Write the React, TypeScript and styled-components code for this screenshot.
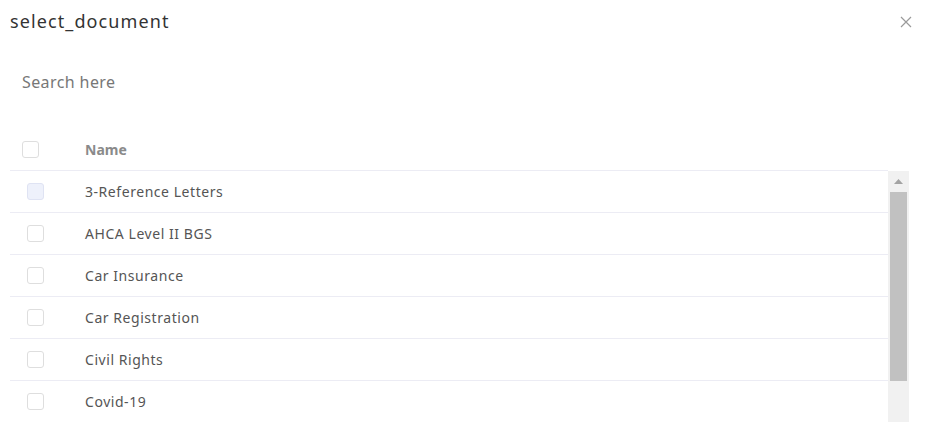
import styled, { createGlobalStyle } from 'styled-components';

const documents = [
  '3-Reference Letters',
  'AHCA Level II BGS',
  'Car Insurance',
  'Car Registration',
  'Civil Rights',
  'Covid-19',
];

const GlobalStyle = createGlobalStyle`
  html, body {
    margin: 0;
    padding: 0;
    background: #fff;
    overflow: hidden;
  }

  body {
    font-family: 'Noto Sans', 'Open Sans', sans-serif;
  }
`;

/**
 * Select document modal
 */
const App = () => {
  return (
    <>
      <GlobalStyle />
      <Modal>
        <ModalHeader>
          <Title>select_document</Title>
          <CloseButton aria-label="close">
            <svg width="12" height="12" viewBox="0 0 12 12">
              <path d="M1 1L11 11M11 1L1 11" stroke="#9a9a9a" strokeWidth="1.2" />
            </svg>
          </CloseButton>
        </ModalHeader>

        <SearchInput placeholder="Search here" />

        <Table>
          <HeadRow>
            <HeadCheckCell>
              <CheckBox />
            </HeadCheckCell>
            <HeadName>Name</HeadName>
          </HeadRow>

          <Body>
            <Rows>
              {documents.map((name, i) => (
                <Row key={name}>
                  <CheckCell>
                    <CheckBox $active={i === 0} />
                  </CheckCell>
                  <NameCell>{name}</NameCell>
                </Row>
              ))}
            </Rows>
            <ScrollBar>
              <ArrowButton>
                <svg width="9" height="5" viewBox="0 0 9 5">
                  <path d="M4.5 0L9 5H0Z" fill="#a3a3a3" />
                </svg>
              </ArrowButton>
              <Thumb />
            </ScrollBar>
          </Body>
        </Table>
      </Modal>
    </>
  );
};

const Modal = styled.div`
  width: 927px;
  height: 422px;
  padding: 0 18px 0 10px;
  box-sizing: border-box;
  overflow: hidden;
  color: #333;
`;

const ModalHeader = styled.div`
  display: flex;
  align-items: center;
  justify-content: space-between;
  height: 42px;
`;

const Title = styled.div`
  font-size: 18px;
  letter-spacing: 1.1px;
  color: #333;
`;

const CloseButton = styled.button`
  display: flex;
  align-items: center;
  justify-content: center;
  width: 20px;
  height: 20px;
  margin: 2px -7px 0 0;
  padding: 0;
  border: none;
  background: none;
`;

const SearchInput = styled.input`
  display: block;
  width: 100%;
  height: 40px;
  margin-top: 20px;
  padding: 0 12px;
  box-sizing: border-box;
  border: none;
  outline: none;
  font-family: inherit;
  font-size: 16px;
  letter-spacing: 0.4px;
  color: #333;

  &::placeholder {
    color: #777;
  }
`;

const Table = styled.div`
  margin-top: 26px;
`;

const HeadRow = styled.div`
  display: flex;
  align-items: center;
  height: 42px;
  margin-right: 21px;
  border-bottom: 1px solid #ececf4;
`;

const HeadCheckCell = styled.div`
  width: 75px;
  padding-left: 12px;
  box-sizing: border-box;
`;

const HeadName = styled.div`
  font-size: 14px;
  font-weight: 700;
  color: #8a8a8a;
`;

const Body = styled.div`
  display: flex;
  height: 260px;
`;

const Rows = styled.div`
  flex: 1;
  overflow: hidden;
`;

const Row = styled.div`
  display: flex;
  align-items: center;
  height: 41px;
  border-bottom: 1px solid #ececf4;
`;

const CheckCell = styled.div`
  width: 75px;
  padding-left: 17px;
  box-sizing: border-box;
`;

const CheckBox = styled.span<{ $active?: boolean }>`
  display: block;
  width: 17px;
  height: 17px;
  box-sizing: border-box;
  border: 1px solid ${({ $active }) => ($active ? '#dfe3f3' : '#dedede')};
  border-radius: 3px;
  background: ${({ $active }) => ($active ? '#eef1fb' : '#fff')};
`;

const NameCell = styled.div`
  font-size: 14px;
  letter-spacing: 0.55px;
  color: #555;
`;

const ScrollBar = styled.div`
  display: flex;
  flex-direction: column;
  align-items: center;
  width: 21px;
  background: #f1f1f1;
`;

const ArrowButton = styled.div`
  display: flex;
  align-items: center;
  justify-content: center;
  height: 21px;
  width: 100%;
`;

const Thumb = styled.div`
  width: 17px;
  height: 189px;
  background: #c1c1c1;
`;

export default App;
